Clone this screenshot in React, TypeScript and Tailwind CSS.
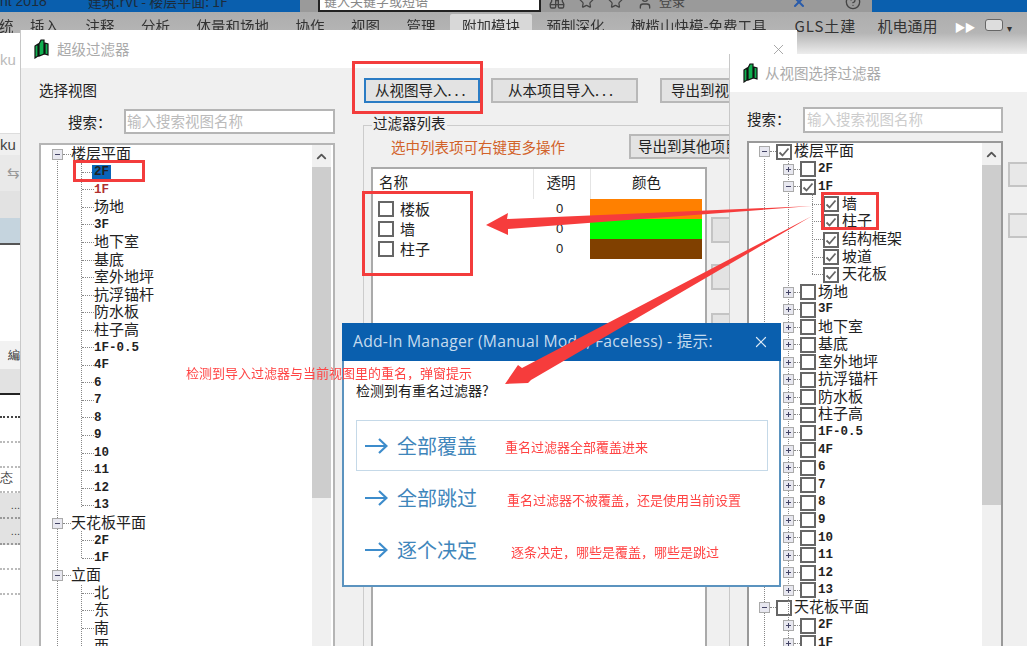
import { Binoculars, ChevronUp, CircleHelp, Star, User, X } from "lucide-react";

const TABS = ["插入", "注释", "分析", "体量和场地", "协作", "视图", "管理", "附加模块", "预制深化", "橄榄山快模-免费工具"];
const FLOORS = ["地下室", "基底", "室外地坪", "抗浮锚杆", "防水板", "柱子高", "1F-0.5", "4F", "6", "7", "8", "9", "10", "11", "12", "13"];

const isLatin = (s: string) => /^[\x00-\x7f]+$/.test(s);

function Label({ text, red, className = "" }: { text: string; red?: boolean; className?: string }) {
  return (
    <span
      className={`whitespace-nowrap leading-none ${red ? "text-[#b03030]" : "text-[#222]"} ${
        isLatin(text) ? "font-['Liberation_Mono',monospace] text-[12.5px] font-bold" : "relative -top-[2px] text-[15px]"
      } ${className}`}
    >
      {text}
    </span>
  );
}

function Expander({ open }: { open?: boolean }) {
  return (
    <span className="relative h-[11px] w-[11px] shrink-0 border border-[#aaa] bg-[#e8e8f0]">
      <span className="absolute left-[2px] top-[4px] h-[1px] w-[5px] bg-[#446]" />
      {!open && <span className="absolute left-[4px] top-[2px] h-[5px] w-[1px] bg-[#446]" />}
    </span>
  );
}

function Stub({ w }: { w: string }) {
  return <span className={`shrink-0 border-t border-dotted border-[#888] ${w}`} />;
}

function Check({ on }: { on?: boolean }) {
  return (
    <span className="flex h-[16px] w-[16px] shrink-0 items-center justify-center border-2 border-[#666] bg-white">
      {on && (
        <svg viewBox="0 0 12 12" className="h-[12px] w-[12px]">
          <path d="M1.5 6.5 4.5 9.5 10.5 2.5" fill="none" stroke="#666" strokeWidth="1.8" />
        </svg>
      )}
    </span>
  );
}

function Scroll({ thumb }: { thumb: string }) {
  return (
    <div className="flex w-[19px] shrink-0 flex-col bg-[#f0f0f0]">
      <div className="flex h-[22px] items-center justify-center">
        <ChevronUp size={15} strokeWidth={3} className="text-[#555]" />
      </div>
      <div className={`bg-[#cdcdcd] ${thumb}`} />
    </div>
  );
}

function LeftRow({ text, root, red }: { text: string; root?: boolean; red?: boolean }) {
  if (root)
    return (
      <div className="flex h-[17.55px] items-center pl-[11px]">
        <Expander open />
        <Stub w="w-[8px]" />
        <Label text={text} />
      </div>
    );
  return (
    <div className="flex h-[17.55px] items-center pl-[41px]">
      <Stub w="w-[12px]" />
      <Label text={text} red={red} />
    </div>
  );
}

function LeftTree() {
  return (
    <div className="mt-[9px] flex min-h-0 w-[296px] flex-1 overflow-hidden border-2 border-b-0 border-[#b5b5b5] bg-white">
      <div className="relative flex-1 pt-[1px]">
        <span className="absolute bottom-0 left-[16px] top-[16px] border-l border-dotted border-[#888]" />
        <span className="absolute left-[40px] top-[18px] h-[344px] border-l border-dotted border-[#888]" />
        <span className="absolute left-[40px] top-[386px] h-[27px] border-l border-dotted border-[#888]" />
        <span className="absolute bottom-0 left-[40px] top-[440px] border-l border-dotted border-[#888]" />
        <LeftRow root text="楼层平面" />
        <div className="flex h-[17.55px] items-center pl-[41px]">
          <Stub w="w-[10px]" />
          <span className="bg-[#0a64b8] px-[2px] font-['Liberation_Mono',monospace] text-[12.5px] font-bold leading-[15px] text-[#222]">2F</span>
        </div>
        <LeftRow text="1F" red />
        <LeftRow text="场地" />
        <LeftRow text="3F" />
        {FLOORS.map((f) => (
          <LeftRow key={f} text={f} />
        ))}
        <LeftRow root text="天花板平面" />
        <LeftRow text="2F" />
        <LeftRow text="1F" />
        <LeftRow root text="立面" />
        <LeftRow text="北" />
        <LeftRow text="东" />
        <LeftRow text="南" />
        <LeftRow text="西" />
      </div>
      <Scroll thumb="h-[331px]" />
      <div className="w-[2px] shrink-0" />
    </div>
  );
}

function R0({ text, on, open }: { text: string; on?: boolean; open?: boolean }) {
  return (
    <div className="flex h-[17.55px] items-center pl-[10px]">
      <Expander open={open} />
      <Stub w="w-[6px]" />
      <Check on={on} />
      <Label text={text} className="ml-[2px]" />
    </div>
  );
}

function R1({ text, on, open }: { text: string; on?: boolean; open?: boolean }) {
  return (
    <div className="flex h-[17.55px] items-center pl-[34px]">
      <Expander open={open} />
      <Stub w="w-[6px]" />
      <Check on={on} />
      <Label text={text} className="ml-[2px]" />
    </div>
  );
}

function R2({ text }: { text: string }) {
  return (
    <div className="flex h-[17.55px] items-center pl-[63px]">
      <Stub w="w-[11px]" />
      <Check on />
      <Label text={text} className="ml-[3px]" />
    </div>
  );
}

function RightTree() {
  return (
    <div className="mt-[8px] flex min-h-0 w-[256px] flex-1 overflow-hidden border-2 border-b-0 border-[#999] bg-white">
      <div className="relative flex-1">
        <span className="absolute bottom-0 left-[15px] top-[16px] border-l border-dotted border-[#888]" />
        <span className="absolute bottom-0 left-[39px] top-[16px] border-l border-dotted border-[#888]" />
        <span className="absolute left-[63px] top-[50px] h-[81px] border-l border-dotted border-[#888]" />
        <R0 text="楼层平面" on open />
        <R1 text="2F" />
        <R1 text="1F" on open />
        <R2 text="墙" />
        <R2 text="柱子" />
        <R2 text="结构框架" />
        <R2 text="坡道" />
        <R2 text="天花板" />
        <R1 text="场地" />
        <R1 text="3F" />
        {FLOORS.map((f) => (
          <R1 key={f} text={f} />
        ))}
        <R0 text="天花板平面" open />
        <R1 text="2F" />
        <R1 text="1F" />
      </div>
      <Scroll thumb="h-[340px]" />
    </div>
  );
}

function WinIcon() {
  return (
    <svg viewBox="0 0 15 20" className="h-[20px] w-[15px] shrink-0">
      <path d="M1 7 4 5V17L1 19Z M5 5 7 1 10 1V15L5 17Z M11 4 14 5V16L11 15Z" fill="#10b050" stroke="#111" strokeWidth="1.2" />
    </svg>
  );
}

function Btn({ children, className }: { children: React.ReactNode; className: string }) {
  return (
    <div className={`flex h-[25px] shrink-0 items-center whitespace-nowrap border-2 bg-[#e3e3e3] pb-[2px] text-[14.5px] text-[#222] ${className}`}>
      {children}
    </div>
  );
}

function MainWindow() {
  return (
    <div className="absolute left-[20px] top-[30px] flex h-[616px] w-[777px] flex-col border-l border-[#c8c8c8] bg-[#f0f0f0]">
      <div className="flex h-[38px] shrink-0 items-center bg-white pl-[13px]">
        <WinIcon />
        <span className="ml-[8px] text-[14.5px] text-[#aaa]">超级过滤器</span>
        <X size={17} strokeWidth={1.2} className="ml-auto mr-[10px] text-[#999]" />
      </div>
      <div className="flex min-h-0 flex-1">
        <div className="flex w-[324px] shrink-0 flex-col pl-[18px]">
          <div className="mt-[12px] text-[14.5px] leading-[20px] text-[#222]">选择视图</div>
          <div className="mt-[9px] flex h-[25px] w-[296px] shrink-0 items-center">
            <span className="ml-[29px] w-[56px] text-[14.5px] text-[#222]">搜索：</span>
            <div className="flex h-[25px] w-[211px] items-center border-2 border-[#b5b5b5] bg-white pl-[1px] pb-[2px] text-[14.5px] text-[#bbb]">输入搜索视图名称</div>
          </div>
          <LeftTree />
        </div>
        <div className="flex min-w-0 flex-1 flex-col">
          <div className="ml-[19px] mt-[10px] flex">
            <Btn className="w-[116px] border-[#2b7cc4] pl-[9px]">从视图导入<span className="tracking-[3px]">...</span></Btn>
            <Btn className="ml-[11px] w-[147px] border-[#b8b8b8] pl-[15px]">从本项目导入<span className="tracking-[3px]">...</span></Btn>
            <Btn className="ml-[22px] w-[110px] border-[#b8b8b8] pl-[9px]">导出到视图</Btn>
          </div>
          <div className="relative ml-[18px] mt-[22px] flex min-h-0 w-[385px] flex-1 flex-col border-l border-t border-[#ccc] pl-[7px]">
            <span className="absolute left-[8px] top-[-13px] bg-[#f0f0f0] px-[1px] text-[14.5px] leading-[20px] text-[#222]">过滤器列表</span>
            <div className="mt-[8px] flex h-[25px] shrink-0">
              <span className="ml-[20px] w-[238px] text-[14.5px] leading-[25px] text-[#d2622a]">选中列表项可右键更多操作</span>
              <Btn className="w-[110px] border-[#b8b8b8] pl-[7px]">导出到其他项目</Btn>
            </div>
            <div className="mt-[8px] flex min-h-0 flex-1">
              <div className="w-[336px] shrink-0 border-2 border-b-0 border-[#aaa] bg-white">
                <div className="grid h-[30px] grid-cols-[160px_57px_112px] text-[14.5px] leading-[26px] text-[#222]">
                  <span className="pl-[6px]">名称</span>
                  <span className="border-l border-[#e4e4e4] pr-[2px] text-center">透明</span>
                  <span className="border-l border-[#e4e4e4] text-center">颜色</span>
                </div>
                {[
                  ["楼板", "bg-[#ff8000]"],
                  ["墙", "bg-[#00ff00]"],
                  ["柱子", "bg-[#804000]"],
                ].map(([name, color]) => (
                  <div key={name} className="grid h-[20px] grid-cols-[160px_57px_112px] items-center text-[15px] text-[#222]">
                    <span className="flex items-center gap-[6px] pl-[5px]">
                      <Check />
                      <span className="relative -top-[1px] leading-none">{name}</span>
                    </span>
                    <span className="pr-[4px] text-center font-['Liberation_Sans',sans-serif] text-[13px]">0</span>
                    <span className={`h-full ${color}`} />
                  </div>
                ))}
              </div>
              <div className="ml-[4px] flex flex-1 flex-col pt-[50px]">
                <div className="h-[26px] w-full border-2 border-[#c4c4c4] bg-[#e3e3e3]" />
                <div className="mt-[21px] h-[26px] w-full border-2 border-[#c4c4c4] bg-[#e3e3e3]" />
                <div className="mt-[23px] h-[26px] w-full border-2 border-[#c4c4c4] bg-[#e3e3e3] text-center font-['Liberation_Sans',sans-serif] text-[11px] leading-[30px] text-[#222]">00</div>
              </div>
            </div>
          </div>
        </div>
      </div>
    </div>
  );
}

function SelectWindow() {
  return (
    <div className="absolute left-[729px] top-[54px] flex h-[592px] w-[298px] flex-col border-l border-[#c8c8c8] bg-[#f0f0f0]">
      <div className="flex h-[38px] shrink-0 items-center bg-white pl-[13px]">
        <WinIcon />
        <span className="ml-[7px] text-[14.5px] text-[#aaa]">从视图选择过滤器</span>
      </div>
      <div className="flex min-h-0 flex-1 pl-[17px]">
        <div className="flex w-[256px] shrink-0 flex-col">
          <div className="mt-[15px] flex h-[26px] shrink-0 items-center">
            <span className="w-[56px] pb-[2px] text-[14.5px] text-[#222]">搜索：</span>
            <div className="flex h-[26px] w-[200px] items-center border-2 border-[#b5b5b5] bg-white pb-[2px] pl-[2px] text-[14.5px] text-[#ccc]">输入搜索视图名称</div>
          </div>
          <RightTree />
        </div>
        <div className="ml-[5px] flex-1 pt-[70px]">
          <div className="h-[25px] border-2 border-r-0 border-[#c4c4c4] bg-[#e8e8e8]" />
          <div className="mt-[26px] h-[25px] border-2 border-r-0 border-[#c4c4c4] bg-[#e8e8e8]" />
        </div>
      </div>
    </div>
  );
}

function ChoiceArrow() {
  return (
    <svg viewBox="0 0 23 18" className="h-[18px] w-[23px] shrink-0">
      <path d="M0 9H21M14 2l7.5 7-7.5 7" fill="none" stroke="#3d8ccb" strokeWidth="2.2" />
    </svg>
  );
}

function Dialog() {
  const choices = ["全部覆盖", "全部跳过", "逐个决定"];
  return (
    <div className="absolute left-[342px] top-[323px] flex h-[264px] w-[439px] flex-col border-2 border-t-0 border-[#5b93bf] bg-white">
      <div className="-mx-[2px] flex h-[38px] shrink-0 items-center bg-[#0a5fae] pl-[11px] pr-[11px] font-['Open_Sans','Noto_Sans_CJK_SC',sans-serif] text-[15.7px] tracking-[0.25px] text-[#c5dbee]">
        <span>Add-In Manager (Manual Mode, Faceless) - 提示:</span>
        <X size={18} strokeWidth={1.6} className="ml-auto text-[#dbe9f5]" />
      </div>
      <div className="ml-[12px] mt-[19px] h-[20px] text-[14px] leading-[20px] text-[#222]">检测到有重名过滤器?</div>
      <div className="ml-[12px] mt-[20px] flex w-[412px] flex-col gap-[1px]">
        {choices.map((c, i) => (
          <div key={c} className={`flex h-[51px] items-center gap-[9px] pl-[8px] text-[20px] text-[#3f86bb] ${i === 0 ? "border border-[#c5d9e8]" : "border border-transparent"}`}>
            <ChoiceArrow />
            {c}
          </div>
        ))}
      </div>
    </div>
  );
}

function Backdrop() {
  return (
    <>
      <div className="flex h-[12px] overflow-hidden bg-[#9a9a9a]">
        <div className="flex w-[300px] bg-[#0a5fae] text-[14px] leading-none text-[#1c2c3c]">
          <span className="-mt-[6px] font-['Liberation_Sans',sans-serif]">nt 2018</span>
          <span className="-mt-[6px] ml-[41px]">建筑.rvt - 楼层平面: 1F</span>
        </div>
        <div className="ml-[18px] h-[12px] w-[223px] border-b-2 border-l-2 border-r-2 border-[#222] bg-white pl-[4px] text-[13px] leading-none text-[#888]">
          <span className="relative -top-[6px]">键入关键字或短语</span>
        </div>
        <div className="flex w-[331px] items-start gap-[14px] pl-[8px] text-[#444]">
          <Binoculars size={16} className="-mt-[6px]" />
          <Star size={15} className="-mt-[6px]" />
          <Star size={15} className="-mt-[6px]" />
          <User size={16} className="-mt-[6px]" />
          <span className="-ml-[8px] -mt-[6px] text-[13px] leading-none">登录</span>
          <X size={16} strokeWidth={3} className="-mt-[6px] ml-[92px] text-[#2a5caa]" />
          <CircleHelp size={16} className="-mt-[6px] ml-[24px]" />
        </div>
        <div className="flex-1 bg-[#0a5fae]" />
      </div>
      <div className="relative flex h-[42px] items-start bg-gradient-to-b from-[#adadad] via-[#b5b5b5] to-[#ededed] pl-[30px] pt-[4px] text-[14.5px] leading-[20px] text-[#333]">
        <span className="absolute -left-[1px] top-[4px]">统</span>
        <div className="flex gap-[26.5px]">
          {TABS.map((t) => (
            <span key={t} className="relative whitespace-nowrap">
              {t === "附加模块" && <span className="absolute -left-[12px] -right-[12px] -top-[2px] h-[30px] rounded-t-[2px] bg-[#d8d8d8]" />}
              <span className="relative">{t}</span>
            </span>
          ))}
        </div>
        <span className="ml-[28px] w-[83px] whitespace-nowrap text-[15px] tracking-[0.9px]">GLS土建</span>
        <span className="whitespace-nowrap text-[15px]">机电通用</span>
        <span className="ml-[17px] mt-[1px] text-[11px] tracking-[-1px] text-white">▶▶</span>
        <span className="ml-[10px] mt-[3px] h-[12px] w-[18px] rounded-[3px] border border-[#666] bg-[#ddd]" />
        <span className="ml-[4px] mt-[2px] text-[10px] text-[#333]">▾</span>
      </div>
      <div className="relative -mt-[21px] w-[20px] overflow-hidden bg-white font-['Liberation_Sans',sans-serif] text-[15px]">
        <div className="h-[43px] pt-[19px] leading-[16px] text-[#bbb]">ku</div>
        <div className="h-[57px]" />
        <div className="h-[22px] border-t border-[#ddd] bg-[#f0f0f0] leading-[22px] text-[#444]">ku</div>
        <div className="flex h-[36px] items-center justify-end bg-[#e9e9e9] text-[#999]">⇆</div>
        <div className="h-[27px] bg-[#e2e2e2]" />
        <div className="h-[27px] border-b-2 border-[#555] bg-[#c5d4de]" />
        <div className="h-[96px]" />
        <div className="flex h-[28px] items-center justify-end bg-[#f2f2f2] text-[12px] text-[#333]">編</div>
        <div className="h-[26px] border-b-2 border-[#222] bg-[#e2e2e2]" />
        <div className="h-[23px] border-b-2 border-dotted border-[#444]" />
        <div className="h-[25px] border-b-2 border-dotted border-[#bbb]" />
        <div className="h-[25px] border-b-2 border-dotted border-[#bbb]" />
        <div className="h-[25px] border-b-2 border-dotted border-[#bbb] text-[13px] text-[#444]">态</div>
        <div className="h-[26px] border-b-2 border-dotted border-[#999] bg-[#e2e2e2] text-right text-[11px] leading-[24px] text-[#444]">...</div>
        <div className="h-[26px] border-b-2 border-dotted border-[#999] bg-[#e2e2e2] text-right text-[11px] leading-[24px] text-[#444]">...</div>
        <div className="h-[25px] border-b-2 border-dotted border-[#bbb]" />
        <div className="h-[25px] border-b-2 border-dotted border-[#bbb]" />
      </div>
    </>
  );
}

function Callouts() {
  return (
    <>
      <svg viewBox="0 0 1027 646" className="pointer-events-none absolute left-0 top-0 h-[646px] w-[1027px]">
        <polygon points="486,225 508,213 507,219 812,206 508,229 508,235" fill="#f63c3c" />
        <polygon points="505,384 518,365 522,368 812,216 531,380 528,383" fill="#f63c3c" />
      </svg>
      <div className="pointer-events-none absolute left-[73px] top-[160px] h-[22px] w-[72px] border-[3px] border-[#f33c3c]" />
      <div className="pointer-events-none absolute left-[352px] top-[61px] h-[53px] w-[131px] border-[3px] border-[#f33c3c]" />
      <div className="pointer-events-none absolute left-[362px] top-[191px] h-[85px] w-[111px] border-[3px] border-[#f33c3c]" />
      <div className="pointer-events-none absolute left-[821px] top-[192px] h-[38px] w-[58px] border-[3px] border-[#f33c3c]" />
      <span className="absolute left-[186px] top-[364px] whitespace-nowrap text-[13px] leading-[18px] text-[#f44]">检测到导入过滤器与当前视图里的重名，弹窗提示</span>
      <span className="absolute left-[505px] top-[438px] whitespace-nowrap text-[13px] leading-[18px] text-[#f44]">重名过滤器全部覆盖进来</span>
      <span className="absolute left-[507px] top-[491px] whitespace-nowrap text-[13px] leading-[18px] text-[#f44]">重名过滤器不被覆盖，还是使用当前设置</span>
      <span className="absolute left-[511px] top-[543px] whitespace-nowrap text-[13px] leading-[18px] text-[#f44]">逐条决定，哪些是覆盖，哪些是跳过</span>
    </>
  );
}

export default function App() {
  return (
    <div className="relative h-[646px] w-[1027px] overflow-hidden bg-white font-['Noto_Sans_CJK_SC',sans-serif]">
      <div className="h-full blur-[0.35px]">
        <Backdrop />
        <MainWindow />
        <SelectWindow />
        <Dialog />
      </div>
      <Callouts />
    </div>
  );
}
